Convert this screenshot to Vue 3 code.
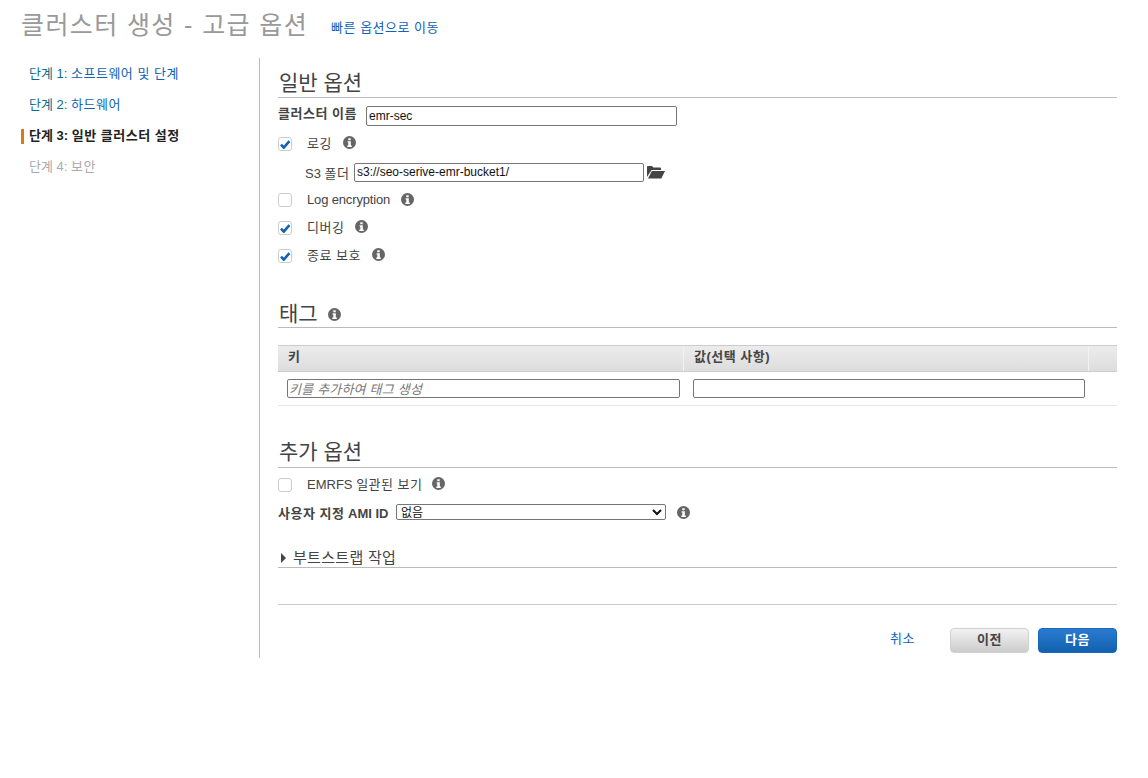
<script setup>
const steps = [
  { label: '단계 1:', name: '소프트웨어 및 단계', state: 'done' },
  { label: '단계 2:', name: '하드웨어', state: 'done' },
  { label: '단계 3:', name: '일반 클러스터 설정', state: 'active' },
  { label: '단계 4:', name: '보안', state: 'todo' },
]
const infoPath = 'M6.5 0a6.5 6.5 0 1 0 0 13a6.5 6.5 0 0 0 0-13zM5.3 2.2h2.4v2H5.3zM4.6 5.2h3.2v4.3h1v1.4H4.3V9.5h1V6.6h-.7z'
const checkPath = 'M1 4.6l2.8 3L9.4 1.2'
</script>

<template>
  <div class="page">
    <header class="top">
      <h1>클러스터 생성 - 고급 옵션</h1>
      <a class="quick">빠른 옵션으로 이동</a>
    </header>
    <div class="main">
      <nav class="side">
        <div v-for="s in steps" :key="s.label" class="step" :class="s.state">
          <span class="num">{{ s.label }}</span> <span class="ko">{{ s.name }}</span>
        </div>
      </nav>
      <section class="content">
        <h2 class="sec first">일반 옵션</h2>
        <div class="row name-row">
          <label class="strong ko">클러스터 이름</label>
          <input class="txt name" value="emr-sec" />
        </div>
        <div class="row check log">
          <span class="box on"><svg width="11" height="9" viewBox="0 0 11 9"><path :d="checkPath" fill="none" stroke="#0f62b5" stroke-width="2.6"/></svg></span>
          <span class="lbl ko">로깅</span>
          <svg class="info" width="13" height="13" viewBox="0 0 13 13"><path :d="infoPath" fill="#666" fill-rule="evenodd"/></svg>
        </div>
        <div class="row s3">
          <label>S3 <span class="ko">폴더</span></label>
          <input class="txt folder" value="s3://seo-serive-emr-bucket1/" />
          <svg class="open" width="18" height="14" viewBox="0 0 18 14"><path d="M0 12V2q0-1 1-1h4l1.4 1.6H13q1 0 1 1V5H4.6L0 12zM4.9 6H18l-3.7 7.4H1z" fill="#444"/></svg>
        </div>
        <div class="row check enc">
          <span class="box"></span>
          <span class="lbl">Log encryption</span>
          <svg class="info" width="13" height="13" viewBox="0 0 13 13"><path :d="infoPath" fill="#666" fill-rule="evenodd"/></svg>
        </div>
        <div class="row check debug">
          <span class="box on"><svg width="11" height="9" viewBox="0 0 11 9"><path :d="checkPath" fill="none" stroke="#0f62b5" stroke-width="2.6"/></svg></span>
          <span class="lbl ko">디버깅</span>
          <svg class="info" width="13" height="13" viewBox="0 0 13 13"><path :d="infoPath" fill="#666" fill-rule="evenodd"/></svg>
        </div>
        <div class="row check term">
          <span class="box on"><svg width="11" height="9" viewBox="0 0 11 9"><path :d="checkPath" fill="none" stroke="#0f62b5" stroke-width="2.6"/></svg></span>
          <span class="lbl ko">종료 보호</span>
          <svg class="info" width="13" height="13" viewBox="0 0 13 13"><path :d="infoPath" fill="#666" fill-rule="evenodd"/></svg>
        </div>

        <h2 class="sec tag-head">태그 <svg class="info" width="13" height="13" viewBox="0 0 13 13"><path :d="infoPath" fill="#666" fill-rule="evenodd"/></svg></h2>
        <div class="thead">
          <div class="th key">키</div>
          <div class="th val"><span class="ko">값(선택 사항)</span></div>
          <div class="th end"></div>
        </div>
        <div class="tbody">
          <input class="txt tkey" placeholder="키를 추가하여 태그 생성" />
          <input class="txt tval" />
        </div>

        <h2 class="sec extra">추가 옵션</h2>
        <div class="row check emrfs">
          <span class="box"></span>
          <span class="lbl">EMRFS <span class="ko">일관된 보기</span></span>
          <svg class="info" width="13" height="13" viewBox="0 0 13 13"><path :d="infoPath" fill="#666" fill-rule="evenodd"/></svg>
        </div>
        <div class="row ami">
          <label class="strong"><span class="ko">사용자 지정</span> AMI ID</label>
          <select class="sel"><option>없음</option></select>
          <svg class="info" width="13" height="13" viewBox="0 0 13 13"><path :d="infoPath" fill="#666" fill-rule="evenodd"/></svg>
        </div>
        <div class="boot"><span class="tri"></span>부트스트랩 작업</div>
        <div class="foot">
          <a class="cancel ko">취소</a>
          <button class="btn prev ko">이전</button>
          <button class="btn next ko">다음</button>
        </div>
      </section>
    </div>
  </div>
</template>

<style scoped>
.page {
  width: 1148px;
  height: 778px;
  background: #fff;
  font-family: "Liberation Sans", "Noto Sans CJK KR", sans-serif;
  font-size: 13px;
  color: #444;
  overflow: hidden;
}
.ko { letter-spacing: 0.5px; }
.top {
  height: 58px;
  display: flex;
  align-items: flex-start;
  padding-left: 21px;
}
h1 {
  margin: 9px 0 0;
  font-size: 25px;
  font-weight: 400;
  line-height: 32px;
  letter-spacing: 1.4px;
  color: #999;
}
.quick {
  margin: 19px 0 0 23px;
  color: #0f62b5;
  font-size: 13px;
  line-height: 18px;
  letter-spacing: 0.5px;
}
.main {
  display: flex;
  height: 600px;
}
.side {
  width: 259px;
  border-right: 1px solid #bbb;
}
.step {
  height: 31px;
  line-height: 31px;
  padding-left: 29px;
  color: #0f62b5;
  position: relative;
}
.step .num { color: #0b6c8c; }
.step.active { color: #222; font-weight: 700; }
.step.active .num { color: #222; }
.step.active::before {
  content: "";
  position: absolute;
  left: 21px;
  top: 9px;
  width: 3px;
  height: 15px;
  background: #d97b12;
}
.step.todo, .step.todo .num { color: #aaa; }
.content {
  width: 839px;
  margin-left: 18px;
}
.sec {
  margin: 0;
  font-size: 21px;
  font-weight: 400;
  line-height: 26px;
  color: #444;
  border-bottom: 1px solid #bbb;
  padding-left: 1px;
}
.sec.first { padding-top: 12px; box-sizing: border-box; height: 40px; }
.sec.tag-head { margin-top: 31px; }
.sec.tag-head .info { margin-left: 5px; vertical-align: 0; }
.sec.extra { margin-top: 33px; padding-bottom: 2px; }
.row { display: flex; align-items: center; }
.strong { font-weight: 700; }
.name-row { margin-top: 8px; height: 20px; }
.name-row label { width: 88px; position: relative; top: -4px; }
.txt {
  box-sizing: border-box;
  height: 20px;
  border: 1px solid #767676;
  border-radius: 2px;
  padding: 0 2px;
  font-family: inherit;
  font-size: 12px;
  color: #111;
  background: #fff;
  outline: none;
}
.name { width: 311px; }
.check { height: 28px; }
.log { margin-top: 4px; }
.box {
  box-sizing: border-box;
  width: 14px;
  height: 14px;
  border: 1px solid #ccc;
  border-radius: 3px;
  display: flex;
  align-items: center;
  justify-content: center;
  background: #fff;
}
.lbl { margin-left: 15px; margin-right: 11px; margin-bottom: 4px; }
.check .info { margin-bottom: 4px; }
.enc .lbl { margin-bottom: 2px; letter-spacing: -0.15px; }
.check.enc .info { margin-bottom: 2px; }
.emrfs .lbl { margin-right: 9px; }
.s3 { height: 26px; padding-left: 27px; margin-top: 1px; }
.s3 label { width: 49px; }
.folder { width: 290px; height: 19px; }
.open { margin-left: 3px; }
.enc { margin-top: 1px; }
.thead {
  margin-top: 17px;
  height: 25px;
  display: flex;
  background: linear-gradient(#ececec, #ddd);
  border-top: 1px solid #ccc;
  border-bottom: 1px solid #ccc;
  font-weight: 700;
  line-height: 21px;
  color: #444;
}
.th { box-sizing: border-box; border-right: 1px solid #f2f2f2; }
.key { width: 406px; padding-left: 10px; }
.val { width: 405px; padding-left: 10px; }
.end { flex: 1; border-right: 0; }
.tbody {
  height: 33px;
  display: flex;
  align-items: center;
  border-bottom: 1px solid #e4e4e4;
  padding-left: 9px;
}
.tkey { width: 393px; height: 19px; padding: 2px 1px 0; font-size: 13px; letter-spacing: 0.2px; }
.tkey::placeholder { color: #777; font-style: italic; }
.tval { width: 392px; height: 19px; margin-left: 13px; }
.emrfs { margin-top: 3px; }
.ami { height: 26px; }
.ami label { width: 118px; }
.sel {
  width: 270px;
  height: 16px;
  box-sizing: border-box;
  font-family: inherit;
  font-size: 12px;
  padding: 0;
  border: 1px solid #767676;
  border-radius: 2px;
  background: #fff;
  color: #111;
  margin-right: 11px;
}
.boot {
  margin-top: 24px;
  height: 18px;
  line-height: 18px;
  font-size: 15px;
  letter-spacing: 0.3px;
  color: #444;
  border-bottom: 1px solid #bbb;
  display: flex;
  align-items: center;
}
.tri {
  width: 0;
  height: 0;
  border-left: 5px solid #444;
  border-top: 5px solid transparent;
  border-bottom: 5px solid transparent;
  margin: 0 7px 0 3px;
}
.foot {
  margin-top: 36px;
  border-top: 1px solid #ccc;
  padding-top: 23px;
  display: flex;
  align-items: center;
  justify-content: flex-end;
}
.cancel { color: #0f62b5; margin-right: 35px; margin-bottom: 6px; font-size: 13px; }
.btn {
  box-sizing: border-box;
  width: 79px;
  height: 25px;
  border-radius: 4px;
  font-family: inherit;
  font-size: 13px;
  font-weight: 700;
  padding: 0 0 5px;
}
.prev {
  background: linear-gradient(#f2f2f2, #ccc);
  border: 1px solid #d0d0d0;
  color: #444;
  margin-right: 9px;
}
.next {
  background: linear-gradient(#2a7bd0, #1261b0);
  border: 1px solid #1a68b8;
  color: #fff;
}
</style>
<style>
html, body { margin: 0; background: #fff; }
</style>
